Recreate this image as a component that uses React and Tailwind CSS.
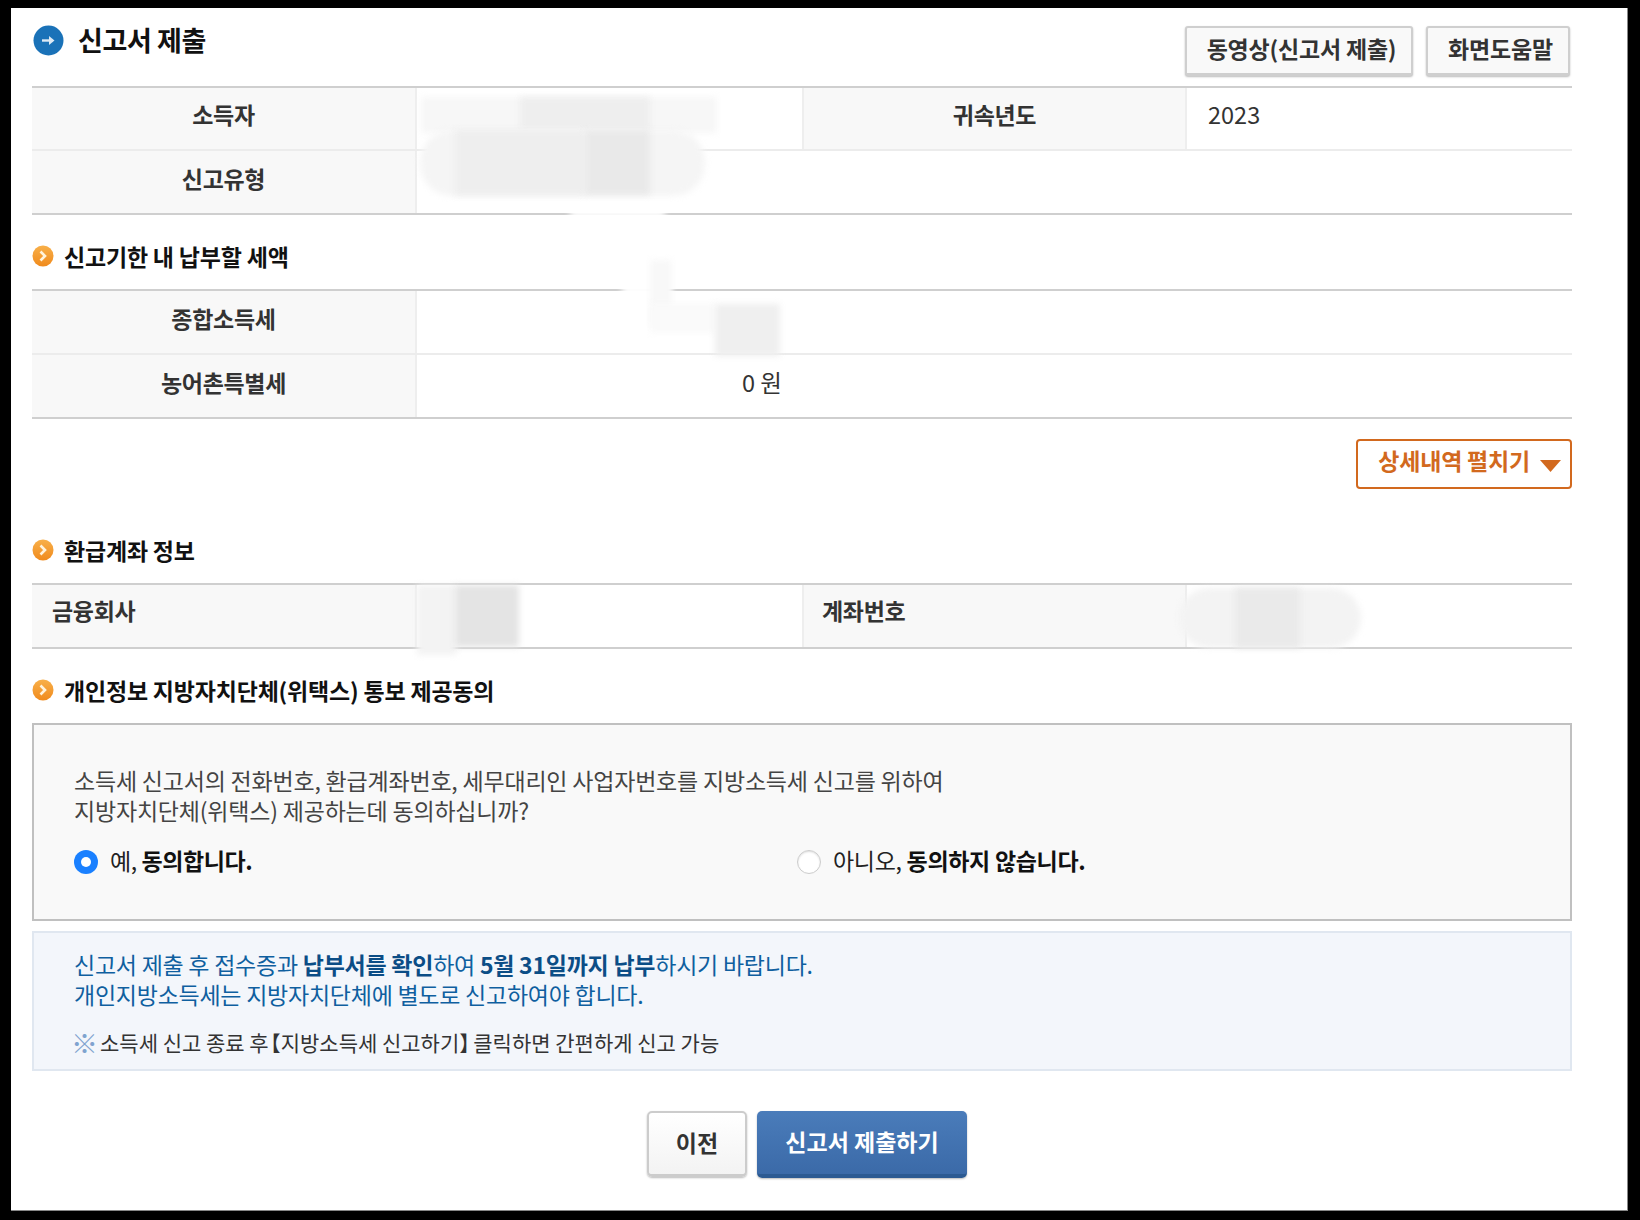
import React from "react";

const font = { fontFamily: '"Noto Sans CJK KR", "Noto Sans", sans-serif' };

const SectionTitle = ({ children, className }) => (
    <div className={"flex items-center h-[22px] " + className}>
        <svg width="22" height="22" viewBox="0 0 22 22" className="shrink-0">
            <defs>
                <linearGradient id="orangeDot" x1="0" y1="0" x2="0" y2="1">
                    <stop offset="0" stopColor="#f8b04a" />
                    <stop offset="1" stopColor="#f08a1c" />
                </linearGradient>
            </defs>
            <circle cx="11" cy="11" r="10.5" fill="url(#orangeDot)" />
            <path d="M8.5 6.5 L13 11 L8.5 15.5" fill="none" stroke="#fff3dc" strokeWidth="2.6" />
        </svg>
        <h3 className="ml-[10px] text-[23px] leading-none font-bold text-[#111] tracking-[-0.2px]">{children}</h3>
    </div>
);

const Label = ({ children, left, mid }) => (
    <div className={"h-full flex items-center bg-[#f8f8f8] border-r-2 border-[#eeeeee] text-[23px] font-bold text-[#333] tracking-[-0.3px] " + (left ? "pb-[12px] " : "pb-[8px] justify-center ") + (left && !mid ? "pl-[20px]" : "") + (left && mid ? "pl-[18px]" : "") + (mid ? " border-l-2" : "")}>
        {children}
    </div>
);

const Blur = ({ className }) => (
    <div className={"absolute z-10 pointer-events-none blur-[3px] " + className} />
);

const ToolButton = ({ children, width }) => (
    <button className={"h-[50px] pb-[5px] pl-[5px] rounded-[3px] border-2 border-[#cfcfcf] border-b-[3px] bg-[#f9f9f9] text-[23px] font-bold text-[#333] tracking-[-0.2px] shadow-[0_1px_2px_#bbbbbb] " + width}>
        {children}
    </button>
);

export default function App() {
    return (
        <div style={font} className="h-[1220px] w-[1640px] bg-black pt-[8px] pl-[11px]">
            <div className="relative h-[1203px] w-[1617px] bg-white pt-[19px] pl-[21px] border-r border-b border-[#888888]">
                <Blur className="left-[410px] top-[89px] w-[296px] h-[36px] bg-[#f7f7f7]" />
                <Blur className="left-[509px] top-[89px] w-[130px] h-[33px] bg-[#eeeeee]" />
                <Blur className="left-[409px] top-[122px] w-[285px] h-[66px] rounded-[32px] bg-[#f5f5f5]" />
                <Blur className="left-[444px] top-[122px] w-[130px] h-[65px] bg-[#eeeeee]" />
                <Blur className="left-[574px] top-[122px] w-[65px] h-[65px] bg-[#e9e9e9]" />
                <Blur className="left-[559px] top-[200px] w-[95px] h-[10px] bg-white" />
                <Blur className="left-[611px] top-[276px] w-[48px] h-[12px] bg-white" />
                <Blur className="left-[639px] top-[252px] w-[22px] h-[66px] bg-[#f8f8f8]" />
                <Blur className="left-[639px] top-[295px] w-[65px] h-[30px] bg-[#fafafa]" />
                <Blur className="left-[704px] top-[296px] w-[65px] h-[52px] bg-[#efefef]" />
                <Blur className="left-[406px] top-[577px] w-[40px] h-[70px] bg-[#f3f3f3]" />
                <Blur className="left-[444px] top-[577px] w-[64px] h-[62px] bg-[#e4e4e4]" />
                <Blur className="left-[1168px] top-[580px] w-[182px] h-[60px] rounded-[30px] bg-[#f3f3f3]" />
                <Blur className="left-[1224px] top-[580px] w-[65px] h-[60px] bg-[#eaeaea]" />

                <div className="relative w-[1540px]">
                    {/* header */}
                    <div className="flex justify-between h-[59px]">
                        <div className="flex items-start">
                            <svg width="31" height="31" viewBox="0 0 31 31" className="ml-[1px] -mt-[2px] shrink-0">
                                <circle cx="15.5" cy="15.5" r="15" fill="#1a72b8" />
                                <path d="M9 15.5 H20" stroke="#dce9f4" strokeWidth="2.4" />
                                <path d="M16 11 L21.5 15.5 L16 20 Z" fill="#dce9f4" />
                            </svg>
                            <h2 className="ml-[14px] -mt-[7px] text-[27px] leading-[40px] font-bold text-[#111] tracking-[-0.4px]">신고서 제출</h2>
                        </div>
                        <div className="flex gap-[13px] pr-[2px] -mt-[1px]">
                            <ToolButton width="w-[228px]">동영상(신고서 제출)</ToolButton>
                            <ToolButton width="w-[144px]">화면도움말</ToolButton>
                        </div>
                    </div>

                    {/* taxpayer */}
                    <div className="border-t-2 border-b-2 border-[#cfcfcf]">
                        <div className="grid grid-cols-4 h-[63px] border-b-2 border-[#ececec]">
                            <Label>소득자</Label>
                            <div />
                            <Label mid>귀속년도</Label>
                            <div className="flex items-center pl-[21px] pb-[7px] text-[23.5px] text-[#333]">2023</div>
                        </div>
                        <div className="grid grid-cols-4 h-[62px]">
                            <Label>신고유형</Label>
                            <div className="col-span-3" />
                        </div>
                    </div>

                    <SectionTitle className="mt-[30px] mb-[22px]">신고기한 내 납부할 세액</SectionTitle>

                    <div className="border-t-2 border-b-2 border-[#cfcfcf]">
                        <div className="grid grid-cols-4 h-[64px] border-b-2 border-[#ececec]">
                            <Label>종합소득세</Label>
                            <div className="col-span-3" />
                        </div>
                        <div className="grid grid-cols-4 h-[62px]">
                            <Label>농어촌특별세</Label>
                            <div className="flex items-center justify-end pr-[20px] pb-[7px] text-[23.5px] text-[#333]">0 원</div>
                        </div>
                    </div>

                    <div className="flex justify-end mt-[20px]">
                        <button className="flex items-center justify-end h-[50px] w-[216px] rounded-[4px] border-2 border-[#d2691e] pr-[9px] text-[23px] font-bold text-[#d2691e] tracking-[-0.2px]">
                            <span className="pb-[7px]">상세내역 펼치기</span>
                            <svg width="21" height="12" viewBox="0 0 21 12" className="ml-[10px] mt-[4px]">
                                <path d="M0 0 H21 L10.5 12 Z" fill="#d2691e" />
                            </svg>
                        </button>
                    </div>

                    <SectionTitle className="mt-[50px] mb-[22px]">환급계좌 정보</SectionTitle>

                    <div className="grid grid-cols-4 h-[66px] border-t-2 border-b-2 border-[#cfcfcf]">
                        <Label left>금융회사</Label>
                        <div />
                        <Label left mid>계좌번호</Label>
                        <div />
                    </div>

                    <SectionTitle className="mt-[30px] mb-[22px]">개인정보 지방자치단체(위택스) 통보 제공동의</SectionTitle>

                    <div className="h-[198px] border-2 border-[#c0c0c0] bg-[#f9f9f9] pt-[40px] pl-[40px]">
                        <p className="text-[23px] leading-[30px] text-[#444] tracking-[-0.2px]">
                            소득세 신고서의 전화번호, 환급계좌번호, 세무대리인 사업자번호를 지방소득세 신고를 위하여<br />
                            지방자치단체(위택스) 제공하는데 동의하십니까?
                        </p>
                        <div className="flex mt-[18px]">
                            <label className="flex items-center w-[723px]">
                                <span className="flex items-center justify-center w-[24px] h-[24px] rounded-full bg-[#1a80ff]">
                                    <span className="w-[10px] h-[10px] rounded-full bg-white" />
                                </span>
                                <span className="ml-[12px] pb-[4px] text-[23px] text-[#222] tracking-[-0.4px]">예, <b className="text-[#111]">동의합니다.</b></span>
                            </label>
                            <label className="flex items-center">
                                <span className="w-[24px] h-[24px] rounded-full border border-[#cccccc] bg-white shadow-[inset_0_1px_2px_#dddddd]" />
                                <span className="ml-[12px] pb-[4px] text-[23px] text-[#222] tracking-[-0.3px]">아니오, <b className="text-[#111]">동의하지 않습니다.</b></span>
                            </label>
                        </div>
                    </div>

                    <div className="h-[140px] mt-[10px] border-2 border-[#e0e7f0] bg-[#f3f6fb] pt-[16px] pl-[40px]">
                        <p className="text-[23px] leading-[30px] text-[#0f5f9f] tracking-[-0.25px]">
                            신고서 제출 후 접수증과 <b className="text-[#0b4d86]">납부서를 확인</b>하여 <b className="text-[#0b4d86]">5월 31일까지 납부</b>하시기 바랍니다.<br />
                            개인지방소득세는 지방자치단체에 별도로 신고하여야 합니다.
                        </p>
                        <p className="flex items-center mt-[18px] text-[21px] leading-[30px] text-[#333]">
                            <span className="w-[26px] text-[27px] leading-none text-[#7fa3cf] -ml-[3px] mr-[3px]">※</span>
                            <span>소득세 신고 종료 후<span className="inline-block -ml-[9px]">【</span>지방소득세 신고하기<span className="inline-block tracking-[-7px]">】</span>클릭하면 간편하게 신고 가능</span>
                        </p>
                    </div>

                    <div className="flex justify-center gap-[10px] mt-[40px] pl-[10px]">
                        <button className="h-[66px] w-[100px] pb-[2px] rounded-[5px] border-2 border-[#cccccc] border-b-[3px] bg-linear-to-b from-white to-[#f3f3f3] text-[23px] font-bold text-[#333] shadow-[0_1px_2px_#bbbbbb]">이전</button>
                        <button className="h-[67px] w-[210px] pb-[3px] rounded-[5px] border-b-[4px] border-[#2c5a92] bg-linear-to-b from-[#4a7cba] to-[#3b6aa8] text-[23px] font-bold text-white shadow-[0_1px_2px_#bbbbbb]">신고서 제출하기</button>
                    </div>
                </div>
            </div>
        </div>
    );
}
